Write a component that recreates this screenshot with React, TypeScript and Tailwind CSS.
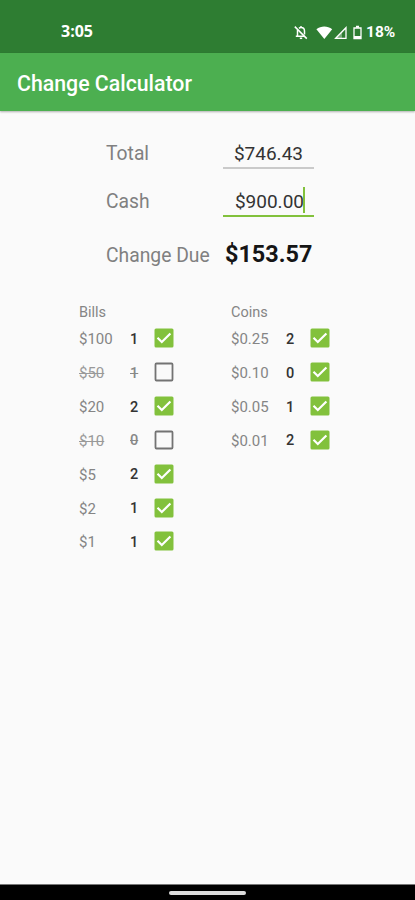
type Denomination = { label: string; count: number; enabled: boolean };

const bills: Denomination[] = [
  { label: "$100", count: 1, enabled: true },
  { label: "$50", count: 1, enabled: false },
  { label: "$20", count: 2, enabled: true },
  { label: "$10", count: 0, enabled: false },
  { label: "$5", count: 2, enabled: true },
  { label: "$2", count: 1, enabled: true },
  { label: "$1", count: 1, enabled: true },
];

const coins: Denomination[] = [
  { label: "$0.25", count: 2, enabled: true },
  { label: "$0.10", count: 0, enabled: true },
  { label: "$0.05", count: 1, enabled: true },
  { label: "$0.01", count: 2, enabled: true },
];

function StatusBar() {
  return (
    <div className="flex h-[53px] items-start bg-[#2e7d32] pt-[22px] pl-[61px] text-white">
      <span className="w-[233px] font-['Open_Sans',sans-serif] text-[16px] leading-[19px] font-bold">3:05</span>
      <svg className="mt-[3px] h-[15px] w-[14px]" viewBox="0 0 14 15" fill="none" stroke="white" strokeWidth="1.500">
        <path d="M.8 1.600 12.800 13.600" />
        <path d="M3.500 5v5.800M1.800 11.300h8.700" />
        <path d="M5 3.400C5.600 2.800 6.200 2.600 7 2.600c2 0 3.500 1.500 3.500 3.600v3.200M7 1v1.600" />
        <path d="M5.800 13.300h2.400" />
      </svg>
      <svg className="mt-[4px] ml-[8px] h-[13px] w-[17px]" viewBox="0 0 17 13" fill="white">
        <path d="M.4 3.200C5-.5 11.500-.5 16.200 3.200L8.300 13Z" />
      </svg>
      <svg className="mt-[4px] ml-[1px] h-[14px] w-[14px]" viewBox="0 0 14 14">
        <path d="M1.700 12.300 12 1.700v10.600Z" fill="none" stroke="white" strokeWidth="1.300" />
        <path d="M1 13 8 5.800V13Z" fill="white" opacity=".35" />
      </svg>
      <svg className="mt-[3px] ml-[5px] h-[15px] w-[9px]" viewBox="0 0 9 15">
        <path d="M1 3h7v10.700H1Z" fill="none" stroke="white" strokeWidth="1.300" />
        <path d="M3 .8h3v2H3zM1 11h7v3H1z" fill="white" />
      </svg>
      <span className="ml-[4px] font-['Roboto',sans-serif] text-[15.500px] leading-5 font-bold">18%</span>
    </div>
  );
}

function Check({ checked }: { checked: boolean }) {
  return (
    <svg className="size-[20px] shrink-0" viewBox="0 0 20 20" fill="none">
      {checked ? (
        <>
          <rect x=".5" y=".5" width="19" height="19" rx="1.500" fill="#82c13c" />
          <path d="m3.500 9.800 4.300 4.200L16.400 5.500" stroke="white" strokeWidth="2.200" />
        </>
      ) : (
        <rect x="1.500" y="1.500" width="17" height="17" rx="1" stroke="#737373" strokeWidth="1.800" />
      )}
    </svg>
  );
}

function DenominationList({ title, items, labelWidth }: { title: string; items: Denomination[]; labelWidth: string }) {
  return (
    <div>
      <h2 className="h-[17.400px] text-[14.500px] leading-[17px] text-[#858585]">{title}</h2>
      {items.map((item) => (
        <div key={item.label} className="flex h-[33.850px] items-center">
          <div className={`${labelWidth} pt-[2px] text-[15px]`}>
            <span className={item.enabled ? "text-[#858585]" : "text-[#999] line-through"}>{item.label}</span>
          </div>
          <div className="w-[24px] pt-[3px]">
            <span className={item.enabled ? "font-medium text-[#333]" : "font-medium text-[#888] line-through"}>
              {item.count}
            </span>
          </div>
          <Check checked={item.enabled} />
        </div>
      ))}
    </div>
  );
}

export default function App() {
  return (
    <div className="flex h-[900px] w-[415px] flex-col overflow-hidden bg-[#fafafa] font-['Roboto',sans-serif]">
      <StatusBar />
      <header className="flex h-[58px] shrink-0 items-center bg-[#4caf50] pt-[4px] pl-[17px] shadow-[0_1px_2px_rgba(0,0,0,0.3)]">
        <h1 className="text-[21.300px] leading-6 font-medium text-white">Change Calculator</h1>
      </header>
      <main className="flex-1">
        <section className="pt-[28px] pl-[106px] text-[19.300px] text-[#808080]">
          <div className="flex h-[48px]">
            <span className="w-[117px] leading-[30px]">Total</span>
            <div className="h-[30px] w-[91px] border-b-2 border-[#cacaca] pr-[11px] text-right text-[19px] leading-[30px] text-[#333]">
              $746.43
            </div>
          </div>
          <div className="flex h-[51px]">
            <span className="w-[117px] leading-[30px]">Cash</span>
            <div className="flex h-[30px] w-[91px] justify-end border-b-2 border-[#82c13c] pr-[9px] text-[19px] leading-[30px] text-[#333]">
              <span className="-mr-px">$900.00</span>
              <span className="h-[26px] w-[2px] bg-[#82c13c]" />
            </div>
          </div>
          <div className="flex h-[35px]">
            <span className="w-[119px] pt-[4px] leading-7">Change Due</span>
            <strong className="pt-[2px] text-[23.400px] leading-[29px] font-bold text-[#151515]">$153.57</strong>
          </div>
        </section>
        <section className="flex gap-[57px] pt-[31px] pl-[79px] text-[14.500px] leading-5">
          <DenominationList title="Bills" items={bills} labelWidth="w-[51px]" />
          <DenominationList title="Coins" items={coins} labelWidth="w-[55px]" />
        </section>
      </main>
      <footer className="flex h-[16px] items-start justify-center border-t border-[#777] bg-black pt-[6px]">
        <div className="h-[4px] w-[77px] rounded-full bg-[#ddd]" />
      </footer>
    </div>
  );
}
